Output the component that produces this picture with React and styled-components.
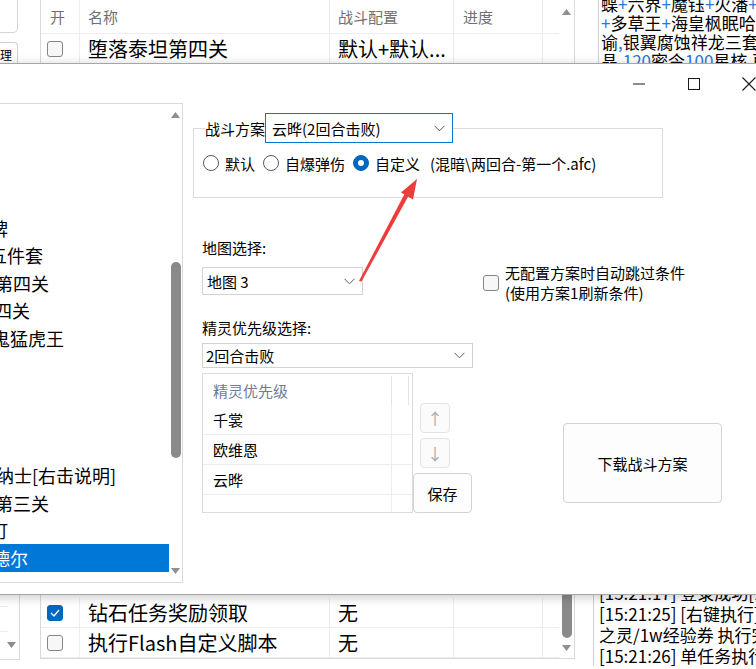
import React from 'react'
import styled, { createGlobalStyle } from 'styled-components'

const FONT = `"Noto Sans CJK SC", "Microsoft YaHei", "Liberation Sans", sans-serif`

const GlobalStyle = createGlobalStyle`
  html, body { margin: 0; padding: 0; background: #fff; }
  body { font-family: ${FONT}; color: #000; overflow: hidden; }
  * { box-sizing: border-box; }
`

const Desktop = styled.div`
  position: relative;
  width: 756px;
  height: 669px;
  overflow: hidden;
  background: #fff;
`

/* ---------- main window behind the dialog ---------- */

const MainWindow = styled.div`
  display: flex;
  height: 100%;
`

const LeftStrip = styled.div`
  width: 20px;
  margin-right: 20px;
  display: flex;
  flex-direction: column;
  justify-content: space-between;
`

const TopBox = styled.div`
  width: 18px;
  height: 34px;
  margin-top: -1px;
  border: 1px solid #d4d4d4;
  border-left: none;
  border-radius: 0 0 5px 0;
`

const ToolButton = styled.div`
  width: 18px;
  height: 30px;
  margin-top: 9px;
  border: 1px solid #cfcfcf;
  border-left: none;
  border-radius: 0 4px 4px 0;
  font-size: 12px;
  line-height: 24px;
  text-align: right;
  padding-right: 8px;
  overflow: hidden;
`

const StripList = styled.div`
  position: relative;
  height: 68px;
  margin-bottom: 9px;
  border-right: 1px solid #dcdcdc;
  border-bottom: 1px solid #dcdcdc;
`

const StripLine = styled.div`
  height: 1px;
  width: 8px;
  background: #ececec;
  margin-top: ${p => p.gap}px;
`

const StripArrow = styled.div`
  display: flex;
  justify-content: flex-end;
  padding-right: 3px;
  margin-top: 10px;
`

const Table = styled.div`
  width: 535px;
  height: 660px;
  margin-top: -1px;
  border: 1px solid #d9d9d9;
  display: flex;
`

const Grid = styled.div`
  flex: 1;
  display: flex;
  flex-direction: column;
`

const Row = styled.div`
  display: grid;
  grid-template-columns: 38px 250px 124px 89px 1fr;
  height: ${p => (p.head ? 34 : 30)}px;
  border-bottom: 1px solid #eeeeee;
  font-size: ${p => (p.head ? 15 : 20)}px;
  color: ${p => (p.head ? '#6f6f6f' : '#000')};
`

const Cell = styled.div`
  display: flex;
  align-items: center;
  padding-left: ${p => p.pad ?? 8}px;
  border-left: ${p => (p.first ? 'none' : '1px solid #ececec')};
  white-space: nowrap;
  overflow: hidden;
`

const Filler = styled.div`
  flex: 1;
`

const Check = styled.div`
  width: 16px;
  height: 16px;
  border-radius: 3px;
  border: 1px solid ${p => (p.on ? '#0067c0' : '#858585')};
  background: ${p => (p.on ? '#0067c0' : '#f7f7f7')};
  display: flex;
  align-items: center;
  justify-content: center;
  flex-shrink: 0;
`

const ScrollBar = styled.div`
  width: 15px;
  display: flex;
  flex-direction: column;
  align-items: center;
`

const ScrollArrow = styled.div`
  height: ${p => p.h}px;
  display: flex;
  align-items: center;
  justify-content: center;
`

const ScrollThumb = styled.div`
  width: ${p => p.w}px;
  height: ${p => p.h}px;
  margin-top: ${p => p.top ?? 0}px;
  border-radius: 6px;
  background: #8a8a8a;
`

const LogColumn = styled.div`
  flex: 1;
  margin-left: 18px;
  display: flex;
  flex-direction: column;
  justify-content: space-between;
  overflow: hidden;
`

const Notes = styled.div`
  margin-left: 5px;
  margin-top: -6px;
  padding-left: 2px;
  border-left: 1px solid #d0d0d0;
  font-size: 17px;
  line-height: 19px;
  white-space: nowrap;
`

const LogBox = styled.div`
  margin-bottom: 3px;
  padding-left: 5px;
  border-left: 1px solid #d0d0d0;
  font-size: 17px;
  line-height: 21px;
  white-space: nowrap;
`

const Hl = styled.span`
  color: #2a78d6;
`

/* ---------- dialog window ---------- */

const Dialog = styled.div`
  position: absolute;
  top: 63px;
  left: -12px;
  width: 792px;
  height: 532px;
  background: #fff;
  border: 1px solid #a6a6a6;
  box-shadow: 0 2px 10px rgba(0, 0, 0, 0.22);
  display: flex;
  flex-direction: column;
  font-size: 15px;
`

const TitleBar = styled.div`
  height: 39px;
  display: flex;
  justify-content: flex-end;
  padding-right: 3px;
`

const Caption = styled.div`
  width: 55px;
  display: flex;
  align-items: center;
  justify-content: center;
`

const DialogBody = styled.div`
  flex: 1;
  display: flex;
  align-items: flex-start;
`

const ListBox = styled.div`
  width: 194px;
  height: 480px;
  border: 1px solid #d9d9d9;
  display: flex;
  overflow: hidden;
`

const Items = styled.div`
  flex: 1;
  overflow: hidden;
`

const Item = styled.div`
  height: 27.5px;
  display: flex;
  align-items: center;
  font-size: 18px;
  white-space: nowrap;
  background: ${p => (p.selected ? '#0078d7' : 'transparent')};
  color: ${p => (p.selected ? '#fff' : '#000')};
  margin-right: -2px;
`

const ItemText = styled.span`
  margin-left: ${p => p.x + 10}px;
`

const ListScroll = styled.div`
  width: 13px;
  display: flex;
  flex-direction: column;
  align-items: center;
`

const Content = styled.div`
  margin-left: 10px;
  display: flex;
  flex-direction: column;
`

const GroupBox = styled.div`
  margin-top: 25px;
  width: 470px;
  height: 70px;
  border: 1px solid #dcdcdc;
  padding-left: 9px;
`

const GroupTitle = styled.div`
  display: flex;
  align-items: center;
  margin-top: -16px;
  margin-left: 2px;
  width: fit-content;
  background: #fff;
`

const ComboBox = styled.div`
  width: ${p => p.w}px;
  height: ${p => p.h}px;
  margin-top: ${p => p.top ?? 0}px;
  border: 1px solid ${p => (p.focus ? '#0078d4' : '#d2d2d2')};
  display: flex;
  align-items: center;
  justify-content: space-between;
  padding: 0 7px 0 ${p => p.pad ?? 6}px;
  background: #fff;
  white-space: nowrap;
`

const RadioRow = styled.div`
  display: flex;
  align-items: center;
  height: 22px;
  margin-top: 9px;
  white-space: nowrap;
`

const Radio = styled.label`
  display: flex;
  align-items: center;
  gap: 6px;
  margin-right: 8px;
`

const RadioDot = styled.span`
  width: 16px;
  height: 16px;
  border-radius: 50%;
  border: 1px solid ${p => (p.on ? '#0067c0' : '#5a5a5a')};
  background: ${p => (p.on ? '#0067c0' : '#fff')};
  display: flex;
  align-items: center;
  justify-content: center;
  &::after {
    content: '';
    width: 6px;
    height: 6px;
    border-radius: 50%;
    background: ${p => (p.on ? '#fff' : 'transparent')};
  }
`

const Hint = styled.span`
  margin-left: 2px;
`

const Lower = styled.div`
  display: flex;
`

const LeftCol = styled.div`
  margin-left: 9px;
  width: 271px;
  display: flex;
  flex-direction: column;
`

const FieldLabel = styled.div`
  margin-top: ${p => p.top}px;
  line-height: 20px;
`

const ListRow = styled.div`
  display: flex;
  margin-top: 5px;
`

const ListView = styled.div`
  width: 211px;
  height: 140px;
  border: 1px solid #dcdcdc;
  overflow: hidden;
`

const LvHead = styled.div`
  display: grid;
  grid-template-columns: 189px 17px 1fr;
  height: 31px;
  color: #6e7b98;
`

const LvHeadCell = styled.div`
  display: flex;
  align-items: center;
  padding-left: ${p => p.pad ?? 0}px;
  margin-top: 2px;
  border-right: ${p => (p.line ? '1px solid #e3e3e3' : 'none')};
`

const LvRow = styled.div`
  display: grid;
  grid-template-columns: 189px 1fr;
  height: 30px;
  border-bottom: 1px solid #ececec;
`

const LvCell = styled.div`
  display: flex;
  align-items: center;
  padding-left: 10px;
  border-right: 1px solid #ececec;
`

const ButtonCol = styled.div`
  width: 60px;
  display: flex;
  flex-direction: column;
`

const ArrowButton = styled.div`
  width: 30px;
  height: 30px;
  margin-left: 7px;
  margin-top: ${p => p.top}px;
  border: 1px solid #e3e3e3;
  border-radius: 4px;
  background: #fbfbfb;
  color: #a9a9a9;
  font-size: 16px;
  display: flex;
  align-items: center;
  justify-content: center;
`

const Button = styled.div`
  width: ${p => p.w}px;
  height: ${p => p.h}px;
  margin-top: ${p => p.top}px;
  margin-left: ${p => p.left ?? 0}px;
  border: 1px solid #d3d3d3;
  border-radius: 4px;
  background: #fdfdfd;
  display: flex;
  align-items: center;
  justify-content: center;
`

const RightCol = styled.div`
  margin-left: 10px;
  display: flex;
  flex-direction: column;
`

const CheckRow = styled.div`
  display: flex;
  align-items: center;
  gap: 6px;
  margin-top: 65px;
  line-height: 20px;
`

const Overlay = styled.svg`
  position: absolute;
  left: 0;
  top: 0;
  pointer-events: none;
`

const Chevron = () => (
  <svg width="11" height="7" viewBox="0 0 11 7">
    <path d="M0.5 0.8 L5.5 5.8 L10.5 0.8" fill="none" stroke="#5c5c5c" strokeWidth="1" />
  </svg>
)

const Tri = ({ down, w = 9, h = 6, color = '#909090' }) => (
  <svg width={w} height={h} viewBox={`0 0 ${w} ${h}`}>
    <path d={down ? `M0 0 L${w} 0 L${w / 2} ${h} Z` : `M0 ${h} L${w} ${h} L${w / 2} 0 Z`} fill={color} />
  </svg>
)

const Tick = () => (
  <svg width="10" height="8" viewBox="0 0 10 8">
    <path d="M1 4 L4 7 L9 1" fill="none" stroke="#fff" strokeWidth="1.3" />
  </svg>
)

const listItems = [
  { text: '' }, { text: '' }, { text: '' }, { text: '' },
  { text: '牌', x: -10 },
  { text: '五件套', x: -11 },
  { text: '第四关', x: -5 },
  { text: '四关', x: -6 },
  { text: '鬼猛虎王', x: -8 },
  { text: '' }, { text: '' }, { text: '' }, { text: '' },
  { text: '纳士[右击说明]', x: -4 },
  { text: '第三关', x: -5 },
  { text: '町', x: -10 },
  { text: '德尔', x: -8, selected: true },
]

const priorities = ['千裳', '欧维恩', '云晔', '']

export default function App() {
  return (
    <Desktop>
      <GlobalStyle />
      <MainWindow>
        <LeftStrip>
          <div>
            <TopBox />
            <ToolButton>理</ToolButton>
          </div>
          <StripList>
            <StripLine gap={14} />
            <StripLine gap={24} />
            <StripArrow>
              <Tri down w={9} h={6} color="#8c8c8c" />
            </StripArrow>
          </StripList>
        </LeftStrip>

        <Table>
          <Grid>
            <Row head>
              <Cell first pad={9}>开</Cell>
              <Cell>名称</Cell>
              <Cell>战斗配置</Cell>
              <Cell pad={9}>进度</Cell>
              <Cell />
            </Row>
            <Row>
              <Cell first pad={6}><Check /></Cell>
              <Cell>堕落泰坦第四关</Cell>
              <Cell>默认+默认...</Cell>
              <Cell />
              <Cell />
            </Row>
            <Filler />
            <Row>
              <Cell first pad={6}><Check on><Tick /></Check></Cell>
              <Cell>钻石任务奖励领取</Cell>
              <Cell>无</Cell>
              <Cell />
              <Cell />
            </Row>
            <Row>
              <Cell first pad={6}><Check /></Cell>
              <Cell>执行Flash自定义脚本</Cell>
              <Cell>无</Cell>
              <Cell />
              <Cell />
            </Row>
          </Grid>
          <ScrollBar>
            <ScrollArrow h={24}><Tri w={9} h={6} color="#8f8f8f" /></ScrollArrow>
            <Filler />
            <ScrollThumb w={10} h={200} />
            <ScrollArrow h={20}><Tri down w={9} h={6} color="#8f8f8f" /></ScrollArrow>
          </ScrollBar>
        </Table>

        <LogColumn>
          <Notes>
            <div>蝶<Hl>+</Hl>六界<Hl>+</Hl>魔钰<Hl>+</Hl>火潘<Hl>+</Hl>光</div>
            <div><Hl>+</Hl>多草王<Hl>+</Hl>海皇枫眠哈奇</div>
            <div>谕<Hl>,</Hl>银翼腐蚀祥龙三套装</div>
            <div>晶<Hl>,120</Hl>密令<Hl>100</Hl>星核,再</div>
          </Notes>
          <LogBox>
            <div>[15:21:17] 登录成功[15:21</div>
            <div>[15:21:25] [右键执行]刷新</div>
            <div>之灵/1w经验券 执行完毕</div>
            <div>[15:21:26] 单任务执行完毕</div>
          </LogBox>
        </LogColumn>
      </MainWindow>

      <Dialog>
        <TitleBar>
          <Caption>
            <svg width="12" height="2" viewBox="0 0 12 2"><rect x="0" y="0.5" width="12" height="1" fill="#1a1a1a" /></svg>
          </Caption>
          <Caption>
            <svg width="12" height="12" viewBox="0 0 12 12"><rect x="0.5" y="0.5" width="11" height="11" fill="none" stroke="#1a1a1a" strokeWidth="1" /></svg>
          </Caption>
          <Caption>
            <svg width="14" height="14" viewBox="0 0 14 14"><path d="M0.5 0.5 L13.5 13.5 M13.5 0.5 L0.5 13.5" stroke="#1a1a1a" strokeWidth="1.1" /></svg>
          </Caption>
        </TitleBar>

        <DialogBody>
          <ListBox>
            <Items>
              {listItems.map((it, i) => (
                <Item key={i} selected={it.selected}>
                  {it.text && <ItemText x={it.x}>{it.text}</ItemText>}
                </Item>
              ))}
            </Items>
            <ListScroll>
              <ScrollArrow h={22}><Tri w={9} h={6} color="#8f8f8f" /></ScrollArrow>
              <ScrollThumb w={10} h={196} top={136} />
              <Filler />
              <ScrollArrow h={22}><Tri down w={9} h={6} color="#8f8f8f" /></ScrollArrow>
            </ListScroll>
          </ListBox>

          <Content>
            <GroupBox>
              <GroupTitle>
                <span>战斗方案</span>
                <ComboBox focus w={188} h={30} pad={6}>
                  <span>云晔(2回合击败)</span>
                  <Chevron />
                </ComboBox>
              </GroupTitle>
              <RadioRow>
                <Radio><RadioDot />默认</Radio>
                <Radio><RadioDot />自爆弹伤</Radio>
                <Radio><RadioDot on />自定义</Radio>
                <Hint>{'(混暗\\两回合-第一个.afc)'}</Hint>
              </RadioRow>
            </GroupBox>

            <Lower>
              <LeftCol>
                <FieldLabel top={40}>地图选择:</FieldLabel>
                <ComboBox w={161} h={28} top={9} pad={4}>
                  <span>地图 3</span>
                  <Chevron />
                </ComboBox>
                <FieldLabel top={23}>精灵优先级选择:</FieldLabel>
                <ComboBox w={271} h={25} top={5} pad={3}>
                  <span>2回合击败</span>
                  <Chevron />
                </ComboBox>
                <ListRow>
                  <ListView>
                    <LvHead>
                      <LvHeadCell pad={10} line>精灵优先级</LvHeadCell>
                      <LvHeadCell line />
                      <LvHeadCell />
                    </LvHead>
                    {priorities.map((p, i) => (
                      <LvRow key={i}>
                        <LvCell>{p}</LvCell>
                        <div />
                      </LvRow>
                    ))}
                  </ListView>
                  <ButtonCol>
                    <ArrowButton top={30}>↑</ArrowButton>
                    <ArrowButton top={5}>↓</ArrowButton>
                    <Button w={59} h={40} top={5}>保存</Button>
                  </ButtonCol>
                </ListRow>
              </LeftCol>

              <RightCol>
                <CheckRow>
                  <Check />
                  <div>
                    <div>无配置方案时自动跳过条件</div>
                    <div>(使用方案1刷新条件)</div>
                  </div>
                </CheckRow>
                <Button w={159} h={80} top={120} left={80}>下载战斗方案</Button>
              </RightCol>
            </Lower>
          </Content>
        </DialogBody>
      </Dialog>

      <Overlay width="756" height="669" viewBox="0 0 756 669">
        <polygon points="359,281 361.5,281.5 409,195 405,193" fill="#ee3b3b" />
        <polygon points="417,179 401,192.5 413,199.5" fill="#ee3b3b" />
      </Overlay>
    </Desktop>
  )
}
